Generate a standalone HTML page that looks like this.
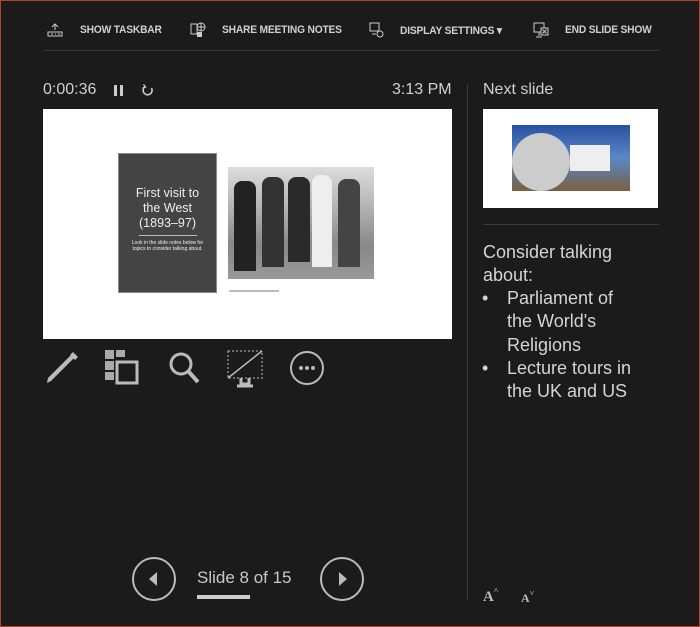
<!DOCTYPE html>
<html><head><meta charset="utf-8"><style>
*{margin:0;padding:0;box-sizing:border-box}
body{width:700px;height:627px;background:#1b1b1b;font-family:"Liberation Sans",sans-serif;color:#d6d6d6;position:relative;overflow:hidden;border:1px solid #b5432c}
.a{position:absolute}
.tb{font-size:11px;font-weight:bold;letter-spacing:-0.2px;color:#d0d0d0;top:23px;transform:scaleX(0.93);transform-origin:left}
.hr{background:#3a3a3a}
.notes{left:482px;top:240px;font-size:18px;line-height:23.3px;color:#d4d4d4}
</style></head><body>
<!-- toolbar -->
<svg class="a" style="left:45px;top:21px" width="18" height="16"><path d="M9 2v6M6 5l3-3 3 3" stroke="#ccc" fill="none"/><rect x="2" y="10" width="14" height="4" stroke="#ccc" fill="none"/><path d="M5 12h2M9 12h1M12 12h2" stroke="#ccc"/></svg>
<div class="a tb" style="left:79px">SHOW TASKBAR</div>
<svg class="a" style="left:188px;top:20px" width="18" height="18"><rect x="2" y="3" width="6" height="10" stroke="#ccc" fill="none"/><circle cx="12" cy="6" r="4" stroke="#ccc" fill="none"/><path d="M8 6h8M12 2v8" stroke="#ccc"/><rect x="8" y="11" width="5" height="5" fill="#ccc"/></svg>
<div class="a tb" style="left:221px">SHARE MEETING NOTES</div>
<svg class="a" style="left:366px;top:20px" width="18" height="18"><rect x="3" y="2" width="9" height="8" stroke="#ccc" fill="none"/><path d="M5 13h4" stroke="#ccc"/><circle cx="13" cy="13" r="3" stroke="#ccc" fill="none"/></svg>
<div class="a tb" style="left:399px">DISPLAY SETTINGS ▾</div>
<svg class="a" style="left:531px;top:20px" width="18" height="18"><rect x="2" y="2" width="10" height="9" stroke="#ccc" fill="none"/><path d="M7 11v4M4 16h6" stroke="#ccc"/><rect x="9" y="7" width="7" height="7" fill="#1b1b1b" stroke="#ccc"/><path d="M10.5 8.5l4 4M14.5 8.5l-4 4" stroke="#ccc"/></svg>
<div class="a tb" style="left:564px">END SLIDE SHOW</div>
<div class="a hr" style="left:42px;top:49px;width:616px;height:1px"></div>
<!-- timer -->
<div class="a" style="left:42px;top:80px;font-size:16px;color:#d0d0d0">0:00:36</div>
<div class="a" style="left:113px;top:84px;width:3px;height:11px;background:#ccc"></div>
<div class="a" style="left:119px;top:84px;width:3px;height:11px;background:#ccc"></div>
<svg class="a" style="left:140px;top:82px" width="14" height="14"><path d="M10.5 5A4.5 4.5 0 1 1 4 3.6" stroke="#ccc" stroke-width="1.6" fill="none"/><path d="M2.5 1.5l2 2.5-2.8 1" stroke="#ccc" stroke-width="1.4" fill="none"/></svg>
<div class="a" style="left:391px;top:80px;font-size:16px;color:#d0d0d0">3:13 PM</div>
<div class="a" style="left:466px;top:83px;width:1px;height:517px;background:#3a3a3a"></div>
<!-- slide -->
<div class="a" style="left:42px;top:108px;width:409px;height:230px;background:#fff">
 <div class="a" style="left:75px;top:44px;width:99px;height:140px;background:#444;border:1px solid #888;text-align:center;color:#eee">
  <div style="margin-top:32px;font-size:12.5px;line-height:15px">First visit to<br>the West<br>(1893–97)</div>
  <div style="margin:4px auto 4px;width:58px;height:1px;background:#bbb"></div>
  <div style="font-size:5px;line-height:6px">Look in the slide notes below for<br>topics to consider talking about.</div>
 </div>
 <div class="a" style="left:185px;top:58px;width:146px;height:112px;background:linear-gradient(#ddd,#bbb 30%,#888 70%,#999)">
  <div class="a" style="left:6px;top:14px;width:22px;height:90px;background:#222;border-radius:8px 8px 0 0"></div>
  <div class="a" style="left:34px;top:10px;width:22px;height:90px;background:#333;border-radius:8px 8px 0 0"></div>
  <div class="a" style="left:60px;top:10px;width:22px;height:85px;background:#2a2a2a;border-radius:8px 8px 0 0"></div>
  <div class="a" style="left:84px;top:8px;width:20px;height:92px;background:#eee;border-radius:8px 8px 0 0"></div>
  <div class="a" style="left:110px;top:12px;width:22px;height:88px;background:#444;border-radius:8px 8px 0 0"></div>
 </div>
 <div class="a" style="left:186px;top:181px;width:50px;height:2px;background:#bbb"></div>
</div>
<!-- tools -->
<svg class="a" style="left:42px;top:348px" width="40" height="38"><path d="M4 34l4-2 24-24-3-3-24 24z" fill="#bbb"/><path d="M30 3l5 5-3 3-5-5z" fill="#bbb"/></svg>
<svg class="a" style="left:103px;top:348px" width="36" height="38"><rect x="1" y="1" width="9" height="9" fill="#aaa"/><rect x="12" y="1" width="9" height="7" fill="#aaa"/><rect x="1" y="12" width="9" height="9" fill="#aaa"/><rect x="1" y="23" width="9" height="8" fill="#aaa"/><rect x="13" y="13" width="20" height="21" fill="none" stroke="#bbb" stroke-width="3"/></svg>
<svg class="a" style="left:166px;top:348px" width="36" height="38"><circle cx="14" cy="15" r="10" stroke="#bbb" stroke-width="3" fill="none"/><path d="M21 22l10 11" stroke="#bbb" stroke-width="4"/></svg>
<svg class="a" style="left:226px;top:348px" width="40" height="40"><path d="M1 2h34v27H1z" stroke="#bbb" stroke-dasharray="2 2" fill="none"/><path d="M1 29L35 2" stroke="#bbb" stroke-width="1.5"/><path d="M14 29v6h8v-6M10 37h16" stroke="#bbb" stroke-width="3" fill="none"/></svg>
<svg class="a" style="left:288px;top:348px" width="38" height="38"><circle cx="18" cy="19" r="16" stroke="#bbb" stroke-width="2" fill="none"/><circle cx="12" cy="19" r="2" fill="#bbb"/><circle cx="18" cy="19" r="2" fill="#bbb"/><circle cx="24" cy="19" r="2" fill="#bbb"/></svg>
<!-- next slide -->
<div class="a" style="left:482px;top:80px;font-size:16px;color:#d0d0d0">Next slide</div>
<div class="a" style="left:482px;top:108px;width:175px;height:99px;background:#fff">
 <div class="a" style="left:29px;top:16px;width:118px;height:66px;background:linear-gradient(#2850a0,#5a88c8 50%,#7a6040)">
  <div class="a" style="left:0;top:8px;width:58px;height:58px;border-radius:50%;background:#ccc"></div>
  <div class="a" style="left:58px;top:20px;width:40px;height:26px;background:#eee"></div>
 </div>
</div>
<div class="a hr" style="left:482px;top:223px;width:176px;height:1px"></div>
<div class="a notes">Consider talking<br>about:</div>
<div class="a notes" style="top:286px;left:481px">•<br><br><br>•</div>
<div class="a notes" style="top:286px;left:506px">Parliament of<br>the World's<br>Religions<br>Lecture tours in<br>the UK and US</div>
<!-- nav -->
<svg class="a" style="left:130px;top:556px" width="46" height="46"><circle cx="23" cy="22" r="21" stroke="#bbb" stroke-width="2" fill="none"/><path d="M26 15v14l-8-7z" fill="#bbb"/></svg>
<div class="a" style="left:196px;top:567px;font-size:17px;color:#c8c8c8">Slide 8 of 15</div>
<div class="a" style="left:196px;top:594px;width:53px;height:4px;background:#ccc"></div>
<svg class="a" style="left:318px;top:556px" width="46" height="46"><circle cx="23" cy="22" r="21" stroke="#bbb" stroke-width="2" fill="none"/><path d="M20 15v14l8-7z" fill="#bbb"/></svg>
<div class="a" style="left:482px;top:585px;font-family:'Liberation Serif',serif;font-weight:bold;font-size:15px;color:#bbb">A<span style="font-size:8px;vertical-align:8px">˄</span></div>
<div class="a" style="left:520px;top:588px;font-family:'Liberation Serif',serif;font-weight:bold;font-size:12px;color:#bbb">A<span style="font-size:8px;vertical-align:6px">˅</span></div>
</body></html>
